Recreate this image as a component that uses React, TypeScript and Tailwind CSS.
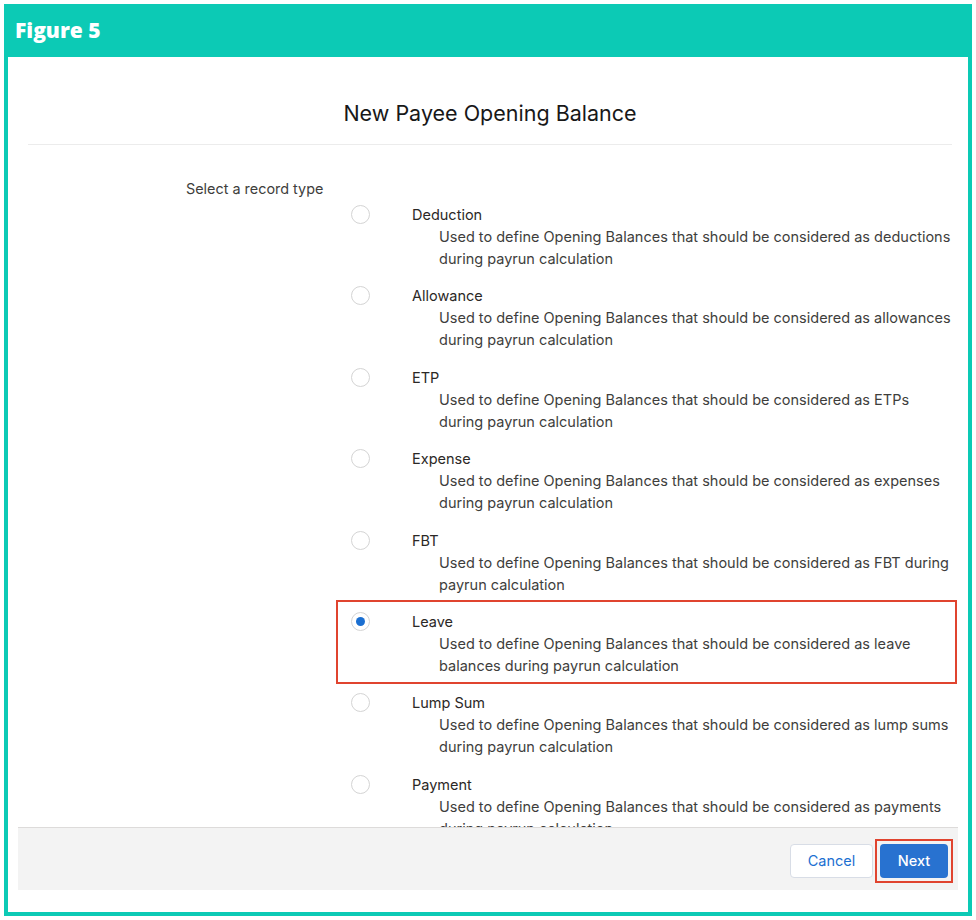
import React from "react"

const font = { fontFamily: "Inter, 'Noto Sans', sans-serif" }

const tipos = [
  { nombre: "Deduction", lineas: ["Used to define Opening Balances that should be considered as deductions", "during payrun calculation"] },
  { nombre: "Allowance", lineas: ["Used to define Opening Balances that should be considered as allowances", "during payrun calculation"] },
  { nombre: "ETP", lineas: ["Used to define Opening Balances that should be considered as ETPs", "during payrun calculation"] },
  { nombre: "Expense", lineas: ["Used to define Opening Balances that should be considered as expenses", "during payrun calculation"] },
  { nombre: "FBT", lineas: ["Used to define Opening Balances that should be considered as FBT during", "payrun calculation"] },
  { nombre: "Leave", lineas: ["Used to define Opening Balances that should be considered as leave", "balances during payrun calculation"], marcado: true },
  { nombre: "Lump Sum", lineas: ["Used to define Opening Balances that should be considered as lump sums", "during payrun calculation"] },
  { nombre: "Payment", lineas: ["Used to define Opening Balances that should be considered as payments", "during payrun calculation"] },
]

function Radio({ checked }: { checked?: boolean }) {
  return (
    <span className="mt-[2px] flex h-[19px] w-[19px] shrink-0 items-center justify-center rounded-full border border-[#d4d4d4] bg-white">
      {checked && <span className="h-[9px] w-[9px] rounded-full bg-[#1b6fd1]" />}
    </span>
  )
}

export default function App() {
  return (
    <div className="h-[920px] w-[976px] bg-white p-1" style={font}>
      <div className="flex h-[912px] w-[968px] flex-col bg-[#0ccab5] px-1 pb-1">
        {/* Cabecera */}
        <div className="flex h-[53px] items-center pl-[7px]">
          <span className="text-[21px] font-extrabold text-white" style={{ fontFamily: "'Open Sans', sans-serif" }}>
            Figure 5
          </span>
        </div>

        <div className="flex flex-1 flex-col bg-white">
          {/* Titulo */}
          <div className="ml-[20px] mr-[16px] border-b border-[#ececec] pb-[17px] pt-[42px] text-center text-[21.5px] leading-[28px] text-[#181818]">
            New Payee Opening Balance
          </div>

          {/* Cuerpo */}
          <div className="h-[682px] overflow-hidden pt-[34px]">
            <div className="pl-[178px] text-[14.4px] leading-[20px] text-[#3e3e3c]">Select a record type</div>
            <div className="mt-[4px] pl-[343px]">
              {tipos.map((t) => (
                <div key={t.nombre} className="relative flex pb-[14.4px]">
                  {t.marcado && (
                    <div className="pointer-events-none absolute -left-[15px] -top-[10px] bottom-[7px] w-[621px] border-2 border-[#e0442f]" />
                  )}
                  <Radio checked={t.marcado} />
                  <div className="ml-[42px] text-[14.5px] text-[#2b2826]">
                    <div className="leading-[23px]">{t.nombre}</div>
                    <div className="pl-[27px] leading-[22px] text-[#3e3e3c]">
                      {t.lineas.map((l) => (
                        <div key={l} className="whitespace-nowrap">{l}</div>
                      ))}
                    </div>
                  </div>
                </div>
              ))}
            </div>
          </div>

          {/* Pie */}
          <div className="mx-[10px] flex h-[63px] items-start justify-end gap-[7px] border-t border-[#dddbda] bg-[#f3f3f3] pr-[10px] pt-[16px]">
            <button className="h-[34px] w-[83px] rounded-[4px] border border-[#d8dde6] bg-white text-[14.5px] text-[#1b6fd1]">
              Cancel
            </button>
            <div className="relative">
              <div className="pointer-events-none absolute -inset-[5px] border-2 border-[#e0442f]" />
              <button className="h-[34px] w-[68px] rounded-[4px] bg-[#2872d0] text-[14.5px] font-medium text-white">
                Next
              </button>
            </div>
          </div>
        </div>
      </div>
    </div>
  )
}
